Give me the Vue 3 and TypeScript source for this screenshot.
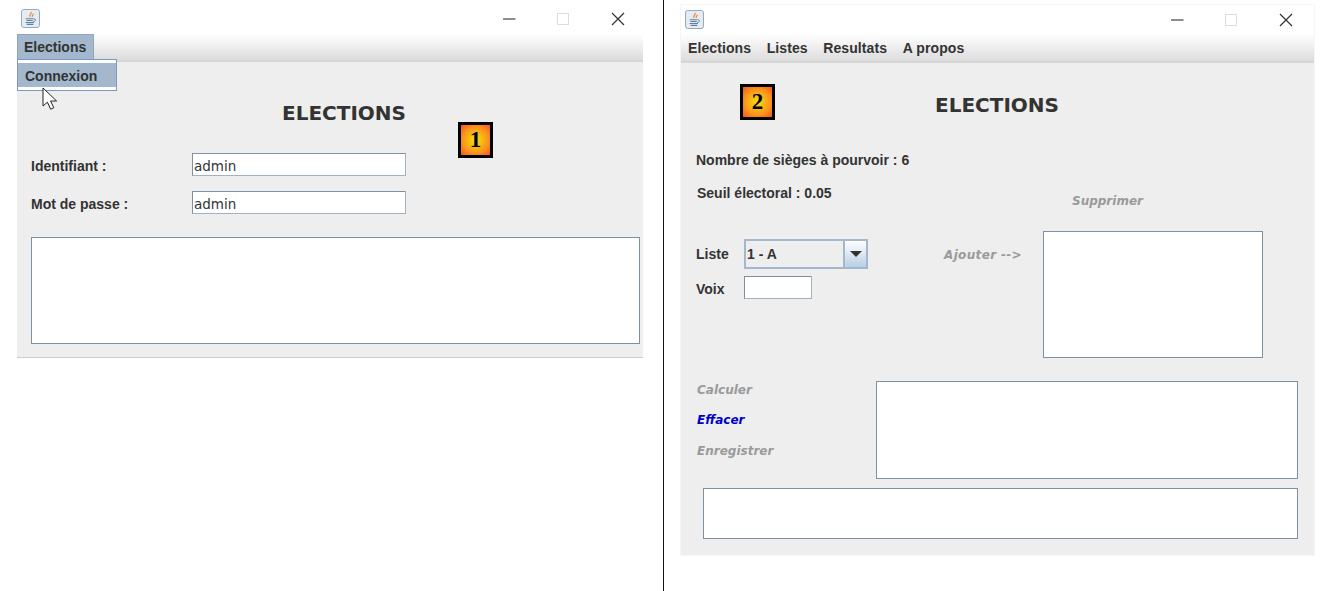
<script setup lang="ts">
const menus: string[] = ['Elections', 'Listes', 'Resultats', 'A propos']
</script>

<template>
  <div class="page">
    <section class="win win-one">
      <header class="titlebar">
        <svg class="java" viewBox="0 0 20 20" aria-hidden="true">
          <rect x="0.5" y="0.5" width="19" height="19" rx="2.5" fill="#e4ebf3" stroke="#8fa3b8" />
          <path d="M10.5 3.2c1.6 1.5-2.6 3 -1 5 M12.6 5c.9 1-1.6 1.9-.5 3.2" fill="none" stroke="#ea8a3c" stroke-width="1.4" />
          <path d="M5 10.2h8.2M5.8 12.2h6.6M4.8 14.2h8.8M6 16.2h7" fill="none" stroke="#5f7f9f" stroke-width="1.1" />
          <path d="M13.4 10.4c2.6-.4 2.6 2.4-.4 2.8" fill="none" stroke="#5f7f9f" />
        </svg>
        <div class="controls">
          <svg class="ctl" viewBox="0 0 14 14" aria-hidden="true"><path d="M1 7h12.5" stroke="#444" stroke-width="1.2" /></svg>
          <svg class="ctl" viewBox="0 0 14 14" aria-hidden="true"><rect x="1.5" y="1.5" width="11" height="11" fill="none" stroke="#dcdcdc" /></svg>
          <svg class="ctl" viewBox="0 0 14 14" aria-hidden="true"><path d="M1 1l12 12M13 1L1 13" stroke="#333" stroke-width="1.2" /></svg>
        </div>
      </header>
      <nav class="menubar">
        <span class="menu-active">Elections</span>
      </nav>
      <div class="body body-one">
        <h1 class="heading">ELECTIONS</h1>
        <div class="field">
          <label class="lbl">Identifiant :</label>
          <input class="text" value="admin" readonly />
        </div>
        <div class="field second">
          <label class="lbl">Mot de passe :</label>
          <input class="text" value="admin" readonly />
        </div>
        <div class="box log"></div>
      </div>
      <div class="dropdown"><span>Connexion</span></div>
      <svg class="cursor" viewBox="0 0 16 24" aria-hidden="true">
        <path d="M1 1v18l4.4-3.8 3.2 7 3.2-1.4-3.2-6.8h6z" fill="#fff" stroke="#222" stroke-width="1" />
      </svg>
      <div class="badge badge-one">1</div>
    </section>

    <div class="divider"></div>

    <section class="win win-two">
      <header class="titlebar">
        <svg class="java" viewBox="0 0 20 20" aria-hidden="true">
          <rect x="0.5" y="0.5" width="19" height="19" rx="2.5" fill="#e4ebf3" stroke="#8fa3b8" />
          <path d="M10.5 3.2c1.6 1.5-2.6 3 -1 5 M12.6 5c.9 1-1.6 1.9-.5 3.2" fill="none" stroke="#ea8a3c" stroke-width="1.4" />
          <path d="M5 10.2h8.2M5.8 12.2h6.6M4.8 14.2h8.8M6 16.2h7" fill="none" stroke="#5f7f9f" stroke-width="1.1" />
          <path d="M13.4 10.4c2.6-.4 2.6 2.4-.4 2.8" fill="none" stroke="#5f7f9f" />
        </svg>
        <div class="controls">
          <svg class="ctl" viewBox="0 0 14 14" aria-hidden="true"><path d="M1 7h12.5" stroke="#444" stroke-width="1.2" /></svg>
          <svg class="ctl" viewBox="0 0 14 14" aria-hidden="true"><rect x="1.5" y="1.5" width="11" height="11" fill="none" stroke="#dcdcdc" /></svg>
          <svg class="ctl" viewBox="0 0 14 14" aria-hidden="true"><path d="M1 1l12 12M13 1L1 13" stroke="#333" stroke-width="1.2" /></svg>
        </div>
      </header>
      <nav class="menubar menubar-two">
        <span v-for="m in menus" :key="m" class="menu-item">{{ m }}</span>
      </nav>
      <div class="body body-two">
        <h1 class="heading heading-two">ELECTIONS</h1>
        <div class="upper">
          <div class="left">
            <p class="lbl info-a">Nombre de sièges à pourvoir : 6</p>
            <p class="lbl info-b">Seuil électoral : 0.05</p>
            <div class="row row-liste">
              <span class="lbl row-lbl">Liste</span>
              <div class="combo">
                <span class="combo-val">1 - A</span>
                <span class="combo-btn"><i class="arrow"></i></span>
              </div>
            </div>
            <div class="row row-voix">
              <span class="lbl row-lbl voix-lbl">Voix</span>
              <input class="text voix" readonly />
            </div>
          </div>
          <div class="add-col"><span class="action add">Ajouter --&gt;</span></div>
          <div class="right">
            <span class="action supp">Supprimer</span>
            <div class="box list-box"></div>
          </div>
        </div>
        <div class="lower">
          <div class="actions">
            <span class="action">Calculer</span>
            <span class="action blue">Effacer</span>
            <span class="action last">Enregistrer</span>
          </div>
          <div class="box result"></div>
        </div>
        <div class="box bottom"></div>
      </div>
      <div class="badge badge-two">2</div>
    </section>
  </div>
</template>

<style>
html, body { background: #fff; overflow: hidden; }
</style>

<style scoped>
.page {
  display: flex;
  align-items: flex-start;
  width: 1336px;
  height: 591px;
  overflow: hidden;
  background: #fff;
  font-family: "Liberation Sans", Arial, sans-serif;
  color: #333;
}
.win {
  position: relative;
  flex: none;
  margin-top: 5px;
  box-sizing: border-box;
}
.win-one { width: 626px; margin-left: 17px; }
.win-two { width: 633px; margin-left: 17px; box-shadow: 0 0 0 1px #f6f6f6; }
.divider { flex: none; width: 1px; height: 591px; margin-left: 20px; background: #111; }

.titlebar {
  box-sizing: border-box;
  display: flex;
  align-items: center;
  justify-content: space-between;
  height: 29px;
  padding-left: 4px;
  background: #fff;
}
.win-one .titlebar { padding-bottom: 2px; }
.java { width: 19px; height: 19px; flex: none; }
.controls { display: flex; gap: 40px; margin-right: 18px; }
.win-two .controls { margin-right: 21px; }
.ctl { width: 14px; height: 14px; display: block; }
.ctl:last-child { margin-left: 1px; }

.menubar {
  box-sizing: border-box;
  height: 28px;
  display: flex;
  background: linear-gradient(#fff 0, #dcdcdc 100%);
  border-bottom: 2px solid #d6d6d6;
}
.menubar-two {
  height: 29px;
  padding-left: 7px;
  align-items: center;
  font-size: 14px;
  font-weight: 700;
  letter-spacing: 0.1px;
}
.menu-item { margin-right: 15.5px; }
.menu-active {
  box-sizing: border-box;
  width: 77px;
  height: 26px;
  padding-left: 6px;
  line-height: 25px;
  font-size: 14px;
  font-weight: 700;
  background: #a3b8cc;
  border: 1px solid #8da5bd;
  border-bottom: 0;
}

.body { background: #eee; box-sizing: border-box; }
.body-one {
  padding: 37px 0 13px 14px;
  border-bottom: 1px solid #ccc;
}
.body-two { padding: 28px 16px 16px 15px; }

.heading {
  margin: 0;
  width: 375px;
  text-align: right;
  font-family: "DejaVu Sans", sans-serif;
  font-size: 20px;
  font-weight: 700;
  line-height: 28px;
  color: #333;
}
.heading-two { width: 363px; }

.lbl { font-size: 14px; font-weight: 700; line-height: 18px; margin: 0; }
.field { display: flex; align-items: center; height: 23px; margin-top: 26px; }
.field .lbl { width: 161px; padding-top: 2px; }
.field.second { margin-top: 15px; }

.text {
  box-sizing: border-box;
  width: 214px;
  height: 23px;
  padding: 2px 1px 0;
  margin: 0;
  border: 1px solid #7f90a2;
  border-right-color: #a3b1c0;
  border-bottom-color: #a3b1c0;
  outline: none;
  background: #fff;
  color: #333;
  font-family: "DejaVu Sans", sans-serif;
  font-size: 13.5px;
}
.box {
  box-sizing: border-box;
  background: #fff;
  border: 1px solid #7f90a2;
}
.log { width: 609px; height: 107px; margin-top: 23px; }

.dropdown {
  position: absolute;
  left: 0;
  top: 54px;
  box-sizing: border-box;
  width: 100px;
  height: 32px;
  border: 1px solid #7f97c6;
  padding: 3px 0;
  background: #fff;
}
.dropdown span {
  display: block;
  height: 24px;
  padding-left: 7px;
  line-height: 26px;
  font-size: 14px;
  font-weight: 700;
  background: #a3b8cc;
}
.cursor { position: absolute; left: 25px; top: 82px; width: 16px; height: 24px; }

.badge {
  position: absolute;
  box-sizing: border-box;
  width: 35px;
  height: 36px;
  border: 3px solid #000;
  background: radial-gradient(circle, #f5e20a 0, #fa8f1c 65%, #f7501f 100%);
  color: #000;
  text-align: center;
  font-family: "Liberation Serif", serif;
  font-size: 23px;
  font-weight: 700;
  line-height: 29px;
}
.badge-one { left: 441px; top: 117px; }
.badge-two { left: 59px; top: 79px; }

.upper { display: flex; align-items: flex-start; margin-top: 32px; }
.left { width: 247px; flex: none; }
.info-b { margin-top: 15px; padding-left: 1px; }
.row { display: flex; align-items: center; }
.row-liste { margin-top: 37px; height: 30px; }
.row-voix { margin-top: 7px; height: 23px; }
.row-lbl { width: 48px; }
.voix-lbl { padding-top: 2px; }
.combo {
  box-sizing: border-box;
  display: flex;
  width: 124px;
  height: 30px;
  border: 2px solid #a3b8cc;
  background: #eee;
}
.combo-val { flex: 1; padding-left: 1px; line-height: 26px; font-size: 14px; font-weight: 700; border-right: 2px solid #a3b8cc; }
.combo-btn {
  width: 21px;
  display: flex;
  align-items: center;
  justify-content: center;
  background: linear-gradient(#fff, #b8cfe5);
}
.arrow { width: 0; height: 0; border: 6px solid transparent; border-top: 6px solid #333; border-bottom: 0; }
.voix { width: 68px; height: 23px; }

.action {
  display: block;
  font-family: "DejaVu Sans", sans-serif;
  font-size: 12px;
  font-style: italic;
  font-weight: 700;
  line-height: 18px;
  color: #9a9a9a;
}
.add { padding-left: 1px; letter-spacing: 0.35px; }
.blue { color: #0000c8; }
.add-col { width: 100px; flex: none; margin-top: 95px; }
.supp { margin-top: 41px; padding-left: 29px; }
.list-box { width: 220px; height: 127px; margin-top: 21px; }

.lower { display: flex; align-items: flex-start; margin-top: 22px; }
.actions { width: 180px; flex: none; padding: 1px 0 0 1px; box-sizing: border-box; }
.actions .action + .action { margin-top: 12px; }
.actions .last { margin-top: 13px !important; }
.result { width: 422px; height: 98px; margin-top: 1px; }
.bottom { width: 595px; height: 51px; margin: 9px 0 0 7px; }
</style>
